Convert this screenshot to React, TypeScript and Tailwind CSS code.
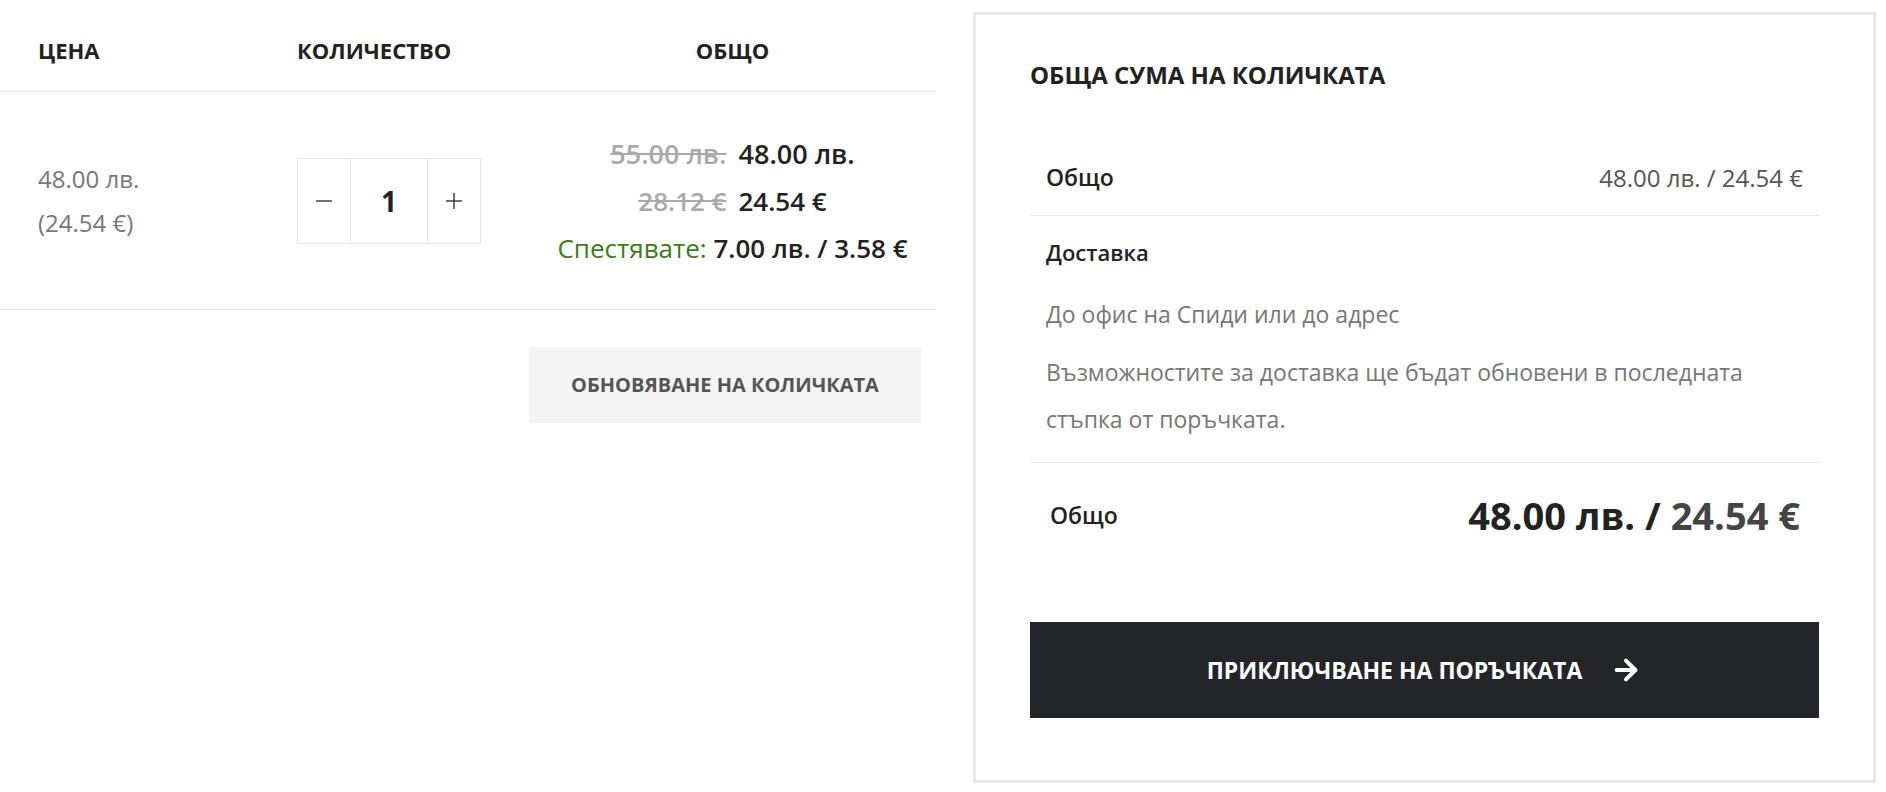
import { ArrowRight } from "lucide-react";

const font = "font-['Open_Sans','Noto_Sans',sans-serif]";

function QtyBox() {
  return (
    <div className="flex h-[86px] w-[184px] border border-[#e6e6e6]">
      <button className="flex w-[53px] items-center justify-center border-r border-[#e6e6e6] text-[#333]">
        <svg width="18" height="18" viewBox="0 0 18 18">
          <line x1="1" y1="9" x2="17" y2="9" stroke="currentColor" strokeWidth="1.4" />
        </svg>
      </button>
      <div className="flex flex-1 items-center justify-center text-[28px] font-bold text-[#222]">
        1
      </div>
      <button className="flex w-[53px] items-center justify-center border-l border-[#e6e6e6] text-[#333]">
        <svg width="18" height="18" viewBox="0 0 18 18">
          <line x1="1" y1="9" x2="17" y2="9" stroke="currentColor" strokeWidth="1.4" />
          <line x1="9" y1="1" x2="9" y2="17" stroke="currentColor" strokeWidth="1.4" />
        </svg>
      </button>
    </div>
  );
}

export default function App() {
  return (
    <div className={`flex min-h-[792px] w-[1886px] bg-white ${font}`}>
      {/* Cart table */}
      <div className="w-[936px]">
        <div className="grid h-[92px] grid-cols-[297px_232px_1fr] items-center border-b border-[#e6e6e6] pt-[9px] text-[22px] font-bold uppercase text-[#222]">
          <div className="pl-[38px]">Цена</div>
          <div>Количество</div>
          <div className="text-center">Общо</div>
        </div>

        <div className="grid h-[218px] grid-cols-[297px_232px_1fr] items-center border-b border-[#e6e6e6]">
          <div className="pl-[38px] text-[24px] leading-[44px] text-[#777]">
            <div>48.00 лв.</div>
            <div>(24.54 €)</div>
          </div>
          <div>
            <QtyBox />
          </div>
          <div className="text-center text-[26px] leading-[47px] font-semibold text-[#222]">
            <div>
              <span className="mr-[12px] text-[27px] text-[#aaa] line-through">55.00 лв.</span>
              <span className="text-[27px]">48.00 лв.</span>
            </div>
            <div>
              <span className="mr-[12px] text-[#aaa] line-through">28.12 €</span>
              <span>24.54 €</span>
            </div>
            <div>
              <span className="font-normal text-[#3c7d1c]">Спестявате:</span> 7.00 лв. / 3.58 €
            </div>
          </div>
        </div>

        <div className="grid grid-cols-[529px_1fr] pt-[37px]">
          <div />
          <div className="pr-[15px]">
            <button className="h-[76px] w-full bg-[#f4f4f4] text-[20px] font-bold uppercase text-[#555]">
              Обновяване на количката
            </button>
          </div>
        </div>
      </div>

      {/* Cart totals */}
      <div className="ml-[37px] mt-3 mb-[9px] w-[903px] border-[3px] border-[#e8e8e8] px-[54px] pt-[43px] pb-[61px]">
        <h2 className="text-[24px] font-bold uppercase leading-[34px] text-[#222]">
          Обща сума на количката
        </h2>

        <div className="mt-[48px]">
          <div className="flex h-[76px] items-center justify-between border-b border-[#e6e6e6] px-4">
            <span className="text-[23px] font-semibold text-[#222]">Общо</span>
            <span className="text-[24px] text-[#555]">48.00 лв. / 24.54 €</span>
          </div>

          <div className="border-b border-[#e6e6e6] px-4 pt-[18px] pb-[19px]">
            <div className="text-[22px] font-semibold leading-[36px] text-[#222]">Доставка</div>
            <div className="mt-[26px] text-[23px] leading-[36px] text-[#777]">
              До офис на Спиди или до адрес
            </div>
            <p className="mt-[17px] text-[23px] leading-[47px] text-[#777]">
              Възможностите за доставка ще бъдат обновени в последната стъпка от поръчката.
            </p>
          </div>

          <div className="flex h-[104px] items-center justify-between px-5 pr-[19px]">
            <span className="text-[23px] font-semibold text-[#222]">Общо</span>
            <span className="text-[38px] font-bold text-[#222]">
              48.00 лв. / <span className="text-[#444]">24.54 €</span>
            </span>
          </div>
        </div>

        <button className="mt-[55px] flex h-[96px] w-full items-center justify-center gap-[28px] bg-[#242529] text-[23px] font-bold uppercase text-white">
          Приключване на поръчката
          <ArrowRight className="h-8 w-8" strokeWidth={3} />
        </button>
      </div>
    </div>
  );
}
